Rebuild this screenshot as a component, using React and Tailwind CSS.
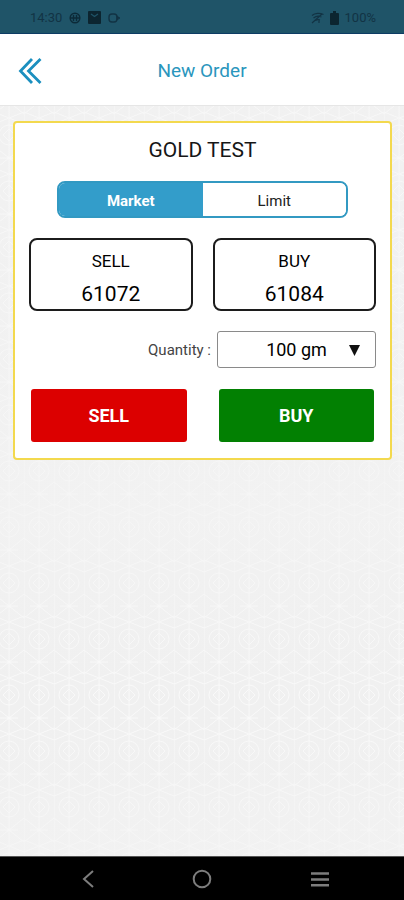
import React, { useState } from 'react';

const QUANTITIES = ['100 gm', '200 gm', '500 gm', '1000 gm'];

function StatusBar() {
  return (
    <div className="flex h-[34px] items-center justify-between border-b border-[#0f3d66] bg-[#1f5468] pl-[30px] pr-[28px] text-[#123344]">
      <div className="flex items-center gap-[7px] pt-0.5">
        <span className="text-[13px] leading-4">14:30</span>
        <svg className="h-3 w-3" viewBox="0 0 12 12" fill="none" stroke="#0c2a38" strokeWidth="1.5">
          <circle cx="6" cy="6" r="4.8" />
          <path d="M2 6h8M4.500 3v6M7.500 3v6" />
        </svg>
        <svg className="h-[13px] w-[13px]" viewBox="0 0 13 13">
          <rect width="13" height="13" rx="1" fill="#0c2530" />
          <path d="M3 3l3.5 2.500L10 3" fill="none" stroke="#1f5468" strokeWidth="1.2" />
        </svg>
        <svg className="h-3 w-3" viewBox="0 0 12 12" fill="none" stroke="currentColor" strokeWidth="1.4">
          <rect x="1" y="2" width="8" height="8" rx="3" />
          <path d="M9 4.500l2.500 1.500L9 7.500z" fill="currentColor" />
        </svg>
      </div>
      <div className="flex items-center gap-[6px] pt-0.5">
        <svg className="h-3 w-[13px]" viewBox="0 0 13 12" fill="none" stroke="currentColor" strokeWidth="1.2">
          <path d="M1 3.500C4 .8 9 .8 12.500 2.500M2.500 6c2.500-2 6-2 8-1M4.500 8.500c1.500-1 3-1 4.500-.5M1 11L11 2M8 7v4" />
        </svg>
        <svg className="h-[14px] w-[9px]" viewBox="0 0 9 14" fill="#0c2530">
          <path d="M3 0h3v2h2q1 0 1 1v10q0 1-1 1H1q-1 0-1-1V3q0-1 1-1h2z" />
        </svg>
        <span className="text-[13px] leading-4">100%</span>
      </div>
    </div>
  );
}

function Header() {
  return (
    <header className="grid h-[72px] grid-cols-[1fr_auto_1fr] items-center border-b border-[#e6e6e6] bg-white px-[18px] pt-0.5 shadow-sm">
      <button type="button" aria-label="Back" className="justify-self-start text-[#1b8fbf]">
        <svg className="h-[26px] w-[24px]" viewBox="0 0 24 26" fill="none" stroke="currentColor" strokeWidth="2.8">
          <path d="M14 1L2.500 13l11.500 12M22.500 1L10.500 13l12 12" />
        </svg>
      </button>
      <h1 className="text-[19px] leading-6 text-[#2a96bd]">New Order</h1>
    </header>
  );
}

/* Faint embossed lattice behind the page content */
function Lattice() {
  return (
    <svg className="absolute inset-0 h-full w-full" aria-hidden="true">
      <defs>
        <pattern id="lattice" width="30" height="56" patternUnits="userSpaceOnUse" x="-6" y="12">
          <g fill="none" stroke="#f9f9f9" strokeWidth="1">
            <path d="M15 0v56M0 0v56" />
            <circle cx="15" cy="17" r="10" />
            <path d="M15 11l6 6-6 6-6-6z" />
            <path d="M0 28l15 12L30 28M0 52l15-12 15 12M6 40h18" />
            <path d="M0 6L15 0l15 6M0 50l15 6 15-6" />
          </g>
          <circle cx="15" cy="40" r="1.500" fill="#fafafa" />
        </pattern>
        <linearGradient id="fade" x1="0" y1="0" x2="0" y2="1">
          <stop offset="0" stopColor="#f3f3f3" stopOpacity="0.3" />
          <stop offset="0.55" stopColor="#f3f3f3" stopOpacity="0.6" />
          <stop offset="0.8" stopColor="#f1f1f1" stopOpacity="0" />
          <stop offset="1" stopColor="#f3f3f3" stopOpacity="0.6" />
        </linearGradient>
      </defs>
      <rect width="100%" height="100%" fill="url(#lattice)" />
      <rect width="100%" height="100%" fill="url(#fade)" />
    </svg>
  );
}

function PriceBox({ label, price }) {
  return (
    <div className="rounded-lg border-2 border-[#1c1c1c] pt-[7px] text-center text-black">
      <div className="text-[17px] leading-7">{label}</div>
      <div className="pt-1 text-[21px] leading-[30px]">{price}</div>
    </div>
  );
}

function OrderCard() {
  const [orderType, setOrderType] = useState('Market');
  const [quantity, setQuantity] = useState(QUANTITIES[0]);

  return (
    <section className="relative rounded-sm border-2 border-[#f3d94e] bg-white px-[14px] pb-4 pt-3">
      <h2 className="text-center text-[21px] leading-[30px] text-[#161616]">GOLD TEST</h2>

      <div className="mx-7 mt-4 grid h-[37px] grid-cols-2 overflow-hidden rounded-lg border-2 border-[#3299c2]">
        {['Market', 'Limit'].map((type) => (
          <button
            key={type}
            type="button"
            aria-pressed={orderType === type}
            onClick={() => setOrderType(type)}
            className={`pt-0.5 text-[15px] leading-5 ${
              orderType === type ? 'bg-[#339dca] font-bold text-white' : 'bg-white text-[#222222]'
            }`}
          >
            {type}
          </button>
        ))}
      </div>

      <div className="mt-5 grid grid-cols-2 gap-5">
        <PriceBox label="SELL" price="61072" />
        <PriceBox label="BUY" price="61084" />
      </div>

      <div className="mt-5 flex items-center justify-end gap-[6px]">
        <label htmlFor="quantity" className="text-[15px] leading-5 text-[#444444]">
          Quantity :
        </label>
        <div className="relative w-[159px]">
          <select
            id="quantity"
            value={quantity}
            onChange={(e) => setQuantity(e.target.value)}
            className="h-[37px] w-full appearance-none rounded-[3px] border border-[#8a8a8a] bg-white text-center text-[18px] leading-6 text-black [text-align-last:center]"
          >
            {QUANTITIES.map((q) => (
              <option key={q}>{q}</option>
            ))}
          </select>
          <svg className="pointer-events-none absolute right-4 top-[14px] h-[11px] w-[11px]" viewBox="0 0 11 11">
            <path d="M0 0h11L5.500 11z" fill="#111111" />
          </svg>
        </div>
      </div>

      <div className="mt-[21px] grid grid-cols-2 gap-8 px-0.5">
        <button type="button" className="h-[53px] rounded-[3px] bg-[#dc0000] text-[18px] font-bold leading-6 text-white">
          SELL
        </button>
        <button type="button" className="h-[53px] rounded-[3px] bg-[#028002] text-[18px] font-bold leading-6 text-white">
          BUY
        </button>
      </div>
    </section>
  );
}

function NavBar() {
  return (
    <nav className="grid h-11 grid-cols-[1fr_auto_1fr] items-center gap-[98px] border-t border-[#555555] bg-black text-[#7d7d7d]">
      <button type="button" aria-label="Back" className="justify-self-end">
        <svg className="h-[18px] w-[12px]" viewBox="0 0 12 18" fill="none" stroke="currentColor" strokeWidth="2">
          <path d="M11 1L2 9l9 8" />
        </svg>
      </button>
      <button type="button" aria-label="Home">
        <svg className="h-5 w-5" viewBox="0 0 20 20" fill="none" stroke="currentColor" strokeWidth="2">
          <circle cx="10" cy="10" r="8.300" />
        </svg>
      </button>
      <button type="button" aria-label="Recent apps" className="justify-self-start">
        <svg className="h-4 w-[20px]" viewBox="0 0 20 16" fill="none" stroke="currentColor" strokeWidth="2.500">
          <path d="M1 2.500h18M1 8.500h18M1 14.200h18" />
        </svg>
      </button>
    </nav>
  );
}

export default function App() {
  return (
    <div className="flex min-h-screen flex-col font-[Roboto,sans-serif]">
      <StatusBar />
      <Header />
      <main className="relative flex-1 bg-[#f0f0f0] pb-4 pl-[13px] pr-3 pt-[15px]">
        <Lattice />
        <OrderCard />
      </main>
      <NavBar />
    </div>
  );
}
